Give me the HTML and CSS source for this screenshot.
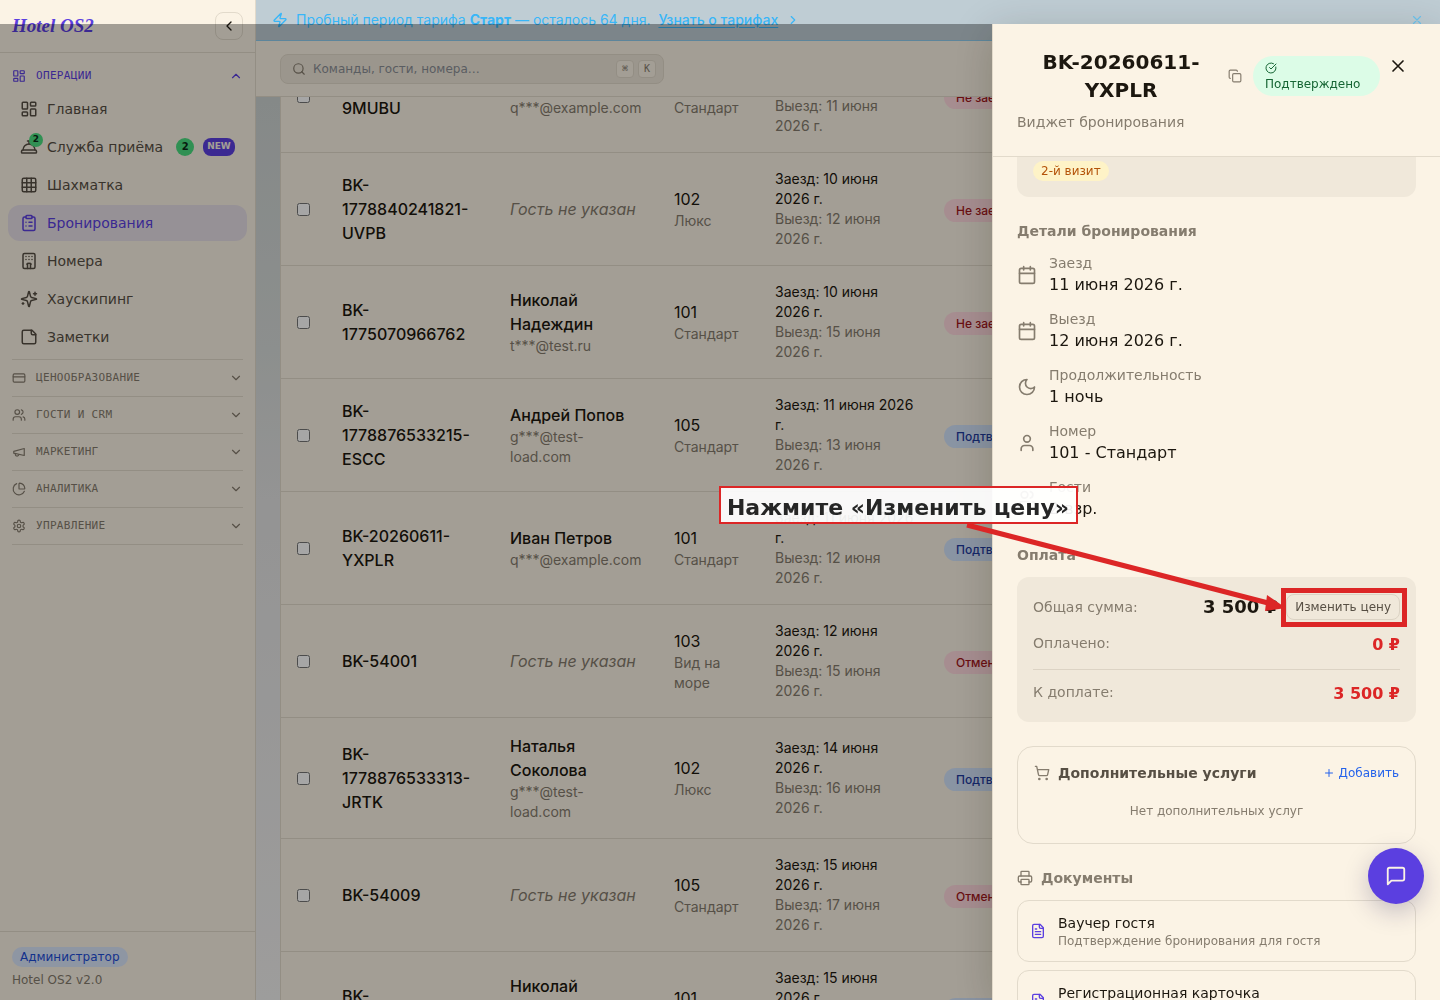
FILE: index.html
```html
<!DOCTYPE html>
<html lang="ru">
<head>
<meta charset="utf-8">
<meta name="viewport" content="width=device-width, initial-scale=1">
<title>Hotel OS2 — Бронирования</title>
<link rel="stylesheet" href="styles.css">
</head>
<body>
<svg class="sprite" aria-hidden="true">
  <symbol id="i-dash" viewBox="0 0 24 24"><rect x="3" y="3" width="7" height="9" rx="1"/><rect x="14" y="3" width="7" height="5" rx="1"/><rect x="14" y="12" width="7" height="9" rx="1"/><rect x="3" y="16" width="7" height="5" rx="1"/></symbol>
  <symbol id="i-bell" viewBox="0 0 24 24"><path d="M3 20a1 1 0 0 1-1-1v-1a2 2 0 0 1 2-2h16a2 2 0 0 1 2 2v1a1 1 0 0 1-1 1Z"/><path d="M20 16a8 8 0 1 0-16 0"/><path d="M12 4v4"/><path d="M10 4h4"/></symbol>
  <symbol id="i-grid" viewBox="0 0 24 24"><rect x="3" y="3" width="18" height="18" rx="2"/><path d="M3 9h18M3 15h18M9 3v18M15 3v18"/></symbol>
  <symbol id="i-clip" viewBox="0 0 24 24"><rect x="8" y="2" width="8" height="4" rx="1"/><path d="M16 4h2a2 2 0 0 1 2 2v14a2 2 0 0 1-2 2H6a2 2 0 0 1-2-2V6a2 2 0 0 1 2-2h2"/><path d="M12 11h4M12 16h4M8 11h.01M8 16h.01"/></symbol>
  <symbol id="i-hotel" viewBox="0 0 24 24"><rect x="4" y="2" width="16" height="20" rx="2"/><path d="M10 22v-6.600M14 15.400V22M15 16a5 5 0 0 0-6 0M8 6h.01M12 6h.01M16 6h.01M8 10h.01M12 10h.01M16 10h.01"/></symbol>
  <symbol id="i-spark" viewBox="0 0 24 24"><path d="M9.937 15.500A2 2 0 0 0 8.500 14.063l-6.135-1.582a.5.5 0 0 1 0-.962L8.500 9.936A2 2 0 0 0 9.937 8.500l1.582-6.135a.5.5 0 0 1 .963 0L14.063 8.500A2 2 0 0 0 15.500 9.937l6.135 1.581a.5.5 0 0 1 0 .964L15.500 14.063a2 2 0 0 0-1.437 1.437l-1.582 6.135a.5.5 0 0 1-.963 0z"/><path d="M20 3v4M22 5h-4M4 17v2M5 18H3"/></symbol>
  <symbol id="i-note" viewBox="0 0 24 24"><path d="M16 3H5a2 2 0 0 0-2 2v14a2 2 0 0 0 2 2h14a2 2 0 0 0 2-2V8Z"/><path d="M15 3v4a2 2 0 0 0 2 2h4"/></symbol>
  <symbol id="i-card" viewBox="0 0 24 24"><rect x="2" y="5" width="20" height="14" rx="2"/><path d="M2 10h20"/></symbol>
  <symbol id="i-users" viewBox="0 0 24 24"><path d="M16 21v-2a4 4 0 0 0-4-4H6a4 4 0 0 0-4 4v2"/><circle cx="9" cy="7" r="4"/><path d="M22 21v-2a4 4 0 0 0-3-3.870M16 3.130a4 4 0 0 1 0 7.750"/></symbol>
  <symbol id="i-mega" viewBox="0 0 24 24"><path d="m3 11 18-5v12L3 14v-3z"/><path d="M11.600 16.800a3 3 0 1 1-5.800-1.600"/></symbol>
  <symbol id="i-pie" viewBox="0 0 24 24"><path d="M21 12c.552 0 1.005-.449.950-.998a10 10 0 0 0-8.953-8.951c-.550-.055-.998.398-.998.950v8a1 1 0 0 0 1 1z"/><path d="M21.210 15.890A10 10 0 1 1 8 2.830"/></symbol>
  <symbol id="i-gear" viewBox="0 0 24 24"><path d="M12.220 2h-.440a2 2 0 0 0-2 2v.180a2 2 0 0 1-1 1.730l-.430.250a2 2 0 0 1-2 0l-.150-.080a2 2 0 0 0-2.730.730l-.220.380a2 2 0 0 0 .730 2.730l.150.100a2 2 0 0 1 1 1.720v.510a2 2 0 0 1-1 1.740l-.150.090a2 2 0 0 0-.730 2.730l.220.380a2 2 0 0 0 2.730.730l.150-.080a2 2 0 0 1 2 0l.430.250a2 2 0 0 1 1 1.730V20a2 2 0 0 0 2 2h.440a2 2 0 0 0 2-2v-.180a2 2 0 0 1 1-1.730l.430-.250a2 2 0 0 1 2 0l.150.080a2 2 0 0 0 2.730-.730l.220-.390a2 2 0 0 0-.730-2.730l-.150-.080a2 2 0 0 1-1-1.740v-.500a2 2 0 0 1 1-1.740l.150-.090a2 2 0 0 0 .730-2.730l-.220-.380a2 2 0 0 0-2.730-.730l-.150.080a2 2 0 0 1-2 0l-.430-.250a2 2 0 0 1-1-1.730V4a2 2 0 0 0-2-2z"/><circle cx="12" cy="12" r="3"/></symbol>
  <symbol id="i-up" viewBox="0 0 24 24"><path d="m18 15-6-6-6 6"/></symbol>
  <symbol id="i-down" viewBox="0 0 24 24"><path d="m6 9 6 6 6-6"/></symbol>
  <symbol id="i-left" viewBox="0 0 24 24"><path d="m15 18-6-6 6-6"/></symbol>
  <symbol id="i-right" viewBox="0 0 24 24"><path d="m9 18 6-6-6-6"/></symbol>
  <symbol id="i-zap" viewBox="0 0 24 24"><path d="M4 14a1 1 0 0 1-.780-1.630l9.900-10.200a.5.5 0 0 1 .860.460l-1.920 6.020A1 1 0 0 0 13 10h7a1 1 0 0 1 .780 1.630l-9.900 10.200a.5.5 0 0 1-.860-.460l1.920-6.020A1 1 0 0 0 11 14z"/></symbol>
  <symbol id="i-x" viewBox="0 0 24 24"><path d="M18 6 6 18M6 6l12 12"/></symbol>
  <symbol id="i-search" viewBox="0 0 24 24"><circle cx="11" cy="11" r="8"/><path d="m21 21-4.300-4.300"/></symbol>
  <symbol id="i-copy" viewBox="0 0 24 24"><rect x="8" y="8" width="14" height="14" rx="2"/><path d="M4 16c-1.100 0-2-.9-2-2V4c0-1.100.9-2 2-2h10c1.100 0 2 .9 2 2"/></symbol>
  <symbol id="i-check" viewBox="0 0 24 24"><path d="M21.801 10A10 10 0 1 1 17 3.335"/><path d="m9 11 3 3L22 4"/></symbol>
  <symbol id="i-cal" viewBox="0 0 24 24"><path d="M8 2v4M16 2v4M3 10h18"/><rect x="3" y="4" width="18" height="18" rx="2"/></symbol>
  <symbol id="i-moon" viewBox="0 0 24 24"><path d="M12 3a6 6 0 0 0 9 9 9 9 0 1 1-9-9Z"/></symbol>
  <symbol id="i-user" viewBox="0 0 24 24"><path d="M19 21v-2a4 4 0 0 0-4-4H9a4 4 0 0 0-4 4v2"/><circle cx="12" cy="7" r="4"/></symbol>
  <symbol id="i-cart" viewBox="0 0 24 24"><circle cx="8" cy="21" r="1"/><circle cx="19" cy="21" r="1"/><path d="M2.050 2.050h2l2.660 12.420a2 2 0 0 0 2 1.580h9.780a2 2 0 0 0 1.950-1.570l1.650-7.430H5.120"/></symbol>
  <symbol id="i-plus" viewBox="0 0 24 24"><path d="M5 12h14M12 5v14"/></symbol>
  <symbol id="i-print" viewBox="0 0 24 24"><path d="M6 18H4a2 2 0 0 1-2-2v-5a2 2 0 0 1 2-2h16a2 2 0 0 1 2 2v5a2 2 0 0 1-2 2h-2"/><path d="M6 9V3a1 1 0 0 1 1-1h10a1 1 0 0 1 1 1v6"/><rect x="6" y="14" width="12" height="8" rx="1"/></symbol>
  <symbol id="i-file" viewBox="0 0 24 24"><path d="M15 2H6a2 2 0 0 0-2 2v16a2 2 0 0 0 2 2h12a2 2 0 0 0 2-2V7Z"/><path d="M14 2v4a2 2 0 0 0 2 2h4M10 9H8M16 13H8M16 17H8"/></symbol>
  <symbol id="i-chat" viewBox="0 0 24 24"><path d="M21 15a2 2 0 0 1-2 2H7l-4 4V5a2 2 0 0 1 2-2h14a2 2 0 0 1 2 2z"/></symbol>
</svg>

<div class="app">
  <aside class="sidebar">
    <div class="sidebar-head">
      <span class="logo">Hotel OS2</span>
      <button class="collapse" aria-label="Свернуть меню"><svg class="icon s16"><use href="#i-left"/></svg></button>
    </div>
    <nav class="nav">
      <button class="section open"><svg class="icon s14"><use href="#i-dash"/></svg><span>Операции</span><svg class="icon s14"><use href="#i-up"/></svg></button>
      <div class="items">
        <a class="item" href="#"><svg class="icon s18"><use href="#i-dash"/></svg>Главная</a>
        <a class="item" href="#"><span class="icon-wrap"><svg class="icon s18"><use href="#i-bell"/></svg><b class="dot">2</b></span>Служба приёма<b class="count">2</b><b class="new">NEW</b></a>
        <a class="item" href="#"><svg class="icon s18"><use href="#i-grid"/></svg>Шахматка</a>
        <a class="item active" href="#"><svg class="icon s18"><use href="#i-clip"/></svg>Бронирования</a>
        <a class="item" href="#"><svg class="icon s18"><use href="#i-hotel"/></svg>Номера</a>
        <a class="item" href="#"><svg class="icon s18"><use href="#i-spark"/></svg>Хаускипинг</a>
        <a class="item" href="#"><svg class="icon s18"><use href="#i-note"/></svg>Заметки</a>
      </div>
      <div class="sections">
        <button class="section"><svg class="icon s14"><use href="#i-card"/></svg><span>Ценообразование</span><svg class="icon s14"><use href="#i-down"/></svg></button>
        <button class="section"><svg class="icon s14"><use href="#i-users"/></svg><span>Гости и CRM</span><svg class="icon s14"><use href="#i-down"/></svg></button>
        <button class="section"><svg class="icon s14"><use href="#i-mega"/></svg><span>Маркетинг</span><svg class="icon s14"><use href="#i-down"/></svg></button>
        <button class="section"><svg class="icon s14"><use href="#i-pie"/></svg><span>Аналитика</span><svg class="icon s14"><use href="#i-down"/></svg></button>
        <button class="section"><svg class="icon s14"><use href="#i-gear"/></svg><span>Управление</span><svg class="icon s14"><use href="#i-down"/></svg></button>
      </div>
    </nav>
    <div class="sidebar-foot">
      <span class="role">Администратор</span>
      <span class="version">Hotel OS2 v2.0</span>
    </div>
  </aside>

  <main class="main">
    <div class="banner">
      <svg class="icon s16"><use href="#i-zap"/></svg>
      <span>Пробный период тарифа <b>Старт</b> — осталось 64 дня.</span>
      <a href="#">Узнать о тарифах</a>
      <svg class="icon s14"><use href="#i-right"/></svg>
      <button class="banner-close" aria-label="Закрыть"><svg class="icon s14"><use href="#i-x"/></svg></button>
    </div>
    <header class="topbar">
      <label class="search">
        <svg class="icon s14"><use href="#i-search"/></svg>
        <input type="text" aria-label="Поиск" placeholder="Команды, гости, номера…">
        <kbd>⌘</kbd><kbd>K</kbd>
      </label>
    </header>
    <div class="content">
      <table class="bookings">
        <colgroup><col class="c-check"><col class="c-id"><col class="c-guest"><col class="c-room"><col class="c-dates"><col></colgroup>
        <tbody>
          <tr><td><input type="checkbox" aria-label="Выбрать"></td><td class="id">BK-20260610-9MUBU</td><td><div class="name">Иван Петров</div><div class="sub">q***@example.com</div></td><td><div>101</div><div class="sub">Стандарт</div></td><td class="dates"><div>Заезд: 10 июня 2026 г.</div><div class="sub">Выезд: 11 июня 2026 г.</div></td><td><span class="status red">Не заехал</span></td></tr>
          <tr><td><input type="checkbox" aria-label="Выбрать"></td><td class="id">BK-1778840241821-UVPB</td><td><i class="none">Гость не указан</i></td><td><div>102</div><div class="sub">Люкс</div></td><td class="dates"><div>Заезд: 10 июня 2026 г.</div><div class="sub">Выезд: 12 июня 2026 г.</div></td><td><span class="status red">Не заехал</span></td></tr>
          <tr><td><input type="checkbox" aria-label="Выбрать"></td><td class="id">BK-1775070966762</td><td><div class="name">Николай Надеждин</div><div class="sub">t***@test.ru</div></td><td><div>101</div><div class="sub">Стандарт</div></td><td class="dates"><div>Заезд: 10 июня 2026 г.</div><div class="sub">Выезд: 15 июня 2026 г.</div></td><td><span class="status red">Не заехал</span></td></tr>
          <tr><td><input type="checkbox" aria-label="Выбрать"></td><td class="id">BK-1778876533215-ESCC</td><td><div class="name">Андрей Попов</div><div class="sub">g***@test-load.com</div></td><td><div>105</div><div class="sub">Стандарт</div></td><td class="dates"><div>Заезд: 11 июня 2026 г.</div><div class="sub">Выезд: 13 июня 2026 г.</div></td><td><span class="status blue">Подтверждено</span></td></tr>
          <tr><td><input type="checkbox" aria-label="Выбрать"></td><td class="id">BK-20260611-YXPLR</td><td><div class="name">Иван Петров</div><div class="sub">q***@example.com</div></td><td><div>101</div><div class="sub">Стандарт</div></td><td class="dates"><div>Заезд: 11 июня 2026 г.</div><div class="sub">Выезд: 12 июня 2026 г.</div></td><td><span class="status blue">Подтверждено</span></td></tr>
          <tr><td><input type="checkbox" aria-label="Выбрать"></td><td class="id">BK-54001</td><td><i class="none">Гость не указан</i></td><td><div>103</div><div class="sub">Вид на море</div></td><td class="dates"><div>Заезд: 12 июня 2026 г.</div><div class="sub">Выезд: 15 июня 2026 г.</div></td><td><span class="status red">Отменено</span></td></tr>
          <tr><td><input type="checkbox" aria-label="Выбрать"></td><td class="id">BK-1778876533313-JRTK</td><td><div class="name">Наталья Соколова</div><div class="sub">g***@test-load.com</div></td><td><div>102</div><div class="sub">Люкс</div></td><td class="dates"><div>Заезд: 14 июня 2026 г.</div><div class="sub">Выезд: 16 июня 2026 г.</div></td><td><span class="status blue">Подтверждено</span></td></tr>
          <tr><td><input type="checkbox" aria-label="Выбрать"></td><td class="id">BK-54009</td><td><i class="none">Гость не указан</i></td><td><div>105</div><div class="sub">Стандарт</div></td><td class="dates"><div>Заезд: 15 июня 2026 г.</div><div class="sub">Выезд: 17 июня 2026 г.</div></td><td><span class="status red">Отменено</span></td></tr>
          <tr><td><input type="checkbox" aria-label="Выбрать"></td><td class="id">BK-1775070966763</td><td><div class="name">Николай Надеждин</div><div class="sub">t***@test.ru</div></td><td><div>101</div><div class="sub">Стандарт</div></td><td class="dates"><div>Заезд: 15 июня 2026 г.</div><div class="sub">Выезд: 18 июня 2026 г.</div></td><td><span class="status blue">Подтверждено</span></td></tr>
        </tbody>
      </table>
    </div>
  </main>
</div>

<div class="overlay"></div>

<section class="drawer" role="dialog" aria-label="Бронирование">
  <header class="drawer-head">
    <div class="drawer-main">
      <div class="drawer-title">
        <h2>BK-20260611-YXPLR</h2>
        <button class="plain copy" aria-label="Копировать"><svg class="icon s14"><use href="#i-copy"/></svg></button>
        <span class="confirmed"><svg class="icon s12"><use href="#i-check"/></svg><span>Подтверждено</span></span>
      </div>
      <p>Виджет бронирования</p>
    </div>
    <button class="plain close" aria-label="Закрыть"><svg class="icon s20"><use href="#i-x"/></svg></button>
  </header>
  <div class="drawer-body">
    <div class="guest-card"><span class="visit">2-й визит</span></div>
    <section class="block">
      <h3>Детали бронирования</h3>
      <div class="detail"><svg class="icon s20"><use href="#i-cal"/></svg><div><div class="label">Заезд</div><div>11 июня 2026 г.</div></div></div>
      <div class="detail"><svg class="icon s20"><use href="#i-cal"/></svg><div><div class="label">Выезд</div><div>12 июня 2026 г.</div></div></div>
      <div class="detail"><svg class="icon s20"><use href="#i-moon"/></svg><div><div class="label">Продолжительность</div><div>1 ночь</div></div></div>
      <div class="detail"><svg class="icon s20"><use href="#i-user"/></svg><div><div class="label">Номер</div><div>101 - Стандарт</div></div></div>
      <div class="detail"><svg class="icon s20"><use href="#i-users"/></svg><div><div class="label">Гости</div><div>2 взр.</div></div></div>
    </section>
    <section class="block">
      <h3>Оплата</h3>
      <div class="pay">
        <div class="pay-row total"><span class="label">Общая сумма:</span><span class="sum"><b>3 500 ₽</b><button class="edit">Изменить цену</button></span></div>
        <div class="pay-row"><span class="label">Оплачено:</span><b class="due">0 ₽</b></div>
        <div class="pay-row rule"><span class="label">К доплате:</span><b class="due">3 500 ₽</b></div>
      </div>
    </section>
    <section class="extras">
      <div class="extras-head"><svg class="icon s16"><use href="#i-cart"/></svg><h3>Дополнительные услуги</h3><button class="plain add"><svg class="icon s12"><use href="#i-plus"/></svg>Добавить</button></div>
      <p>Нет дополнительных услуг</p>
    </section>
    <section class="block">
      <h3 class="with-icon"><svg class="icon s16"><use href="#i-print"/></svg>Документы</h3>
      <div class="docs">
        <a class="doc" href="#"><svg class="icon s16"><use href="#i-file"/></svg><span><span class="doc-name">Ваучер гостя</span><span class="doc-note">Подтверждение бронирования для гостя</span></span></a>
        <a class="doc" href="#"><svg class="icon s16"><use href="#i-file"/></svg><span><span class="doc-name">Регистрационная карточка</span><span class="doc-note">Анкета гостя для заселения</span></span></a>
      </div>
    </section>
  </div>
</section>

<button class="chat" aria-label="Чат"><svg class="icon s22"><use href="#i-chat"/></svg></button>

<div class="guide">
  <div class="guide-text">Нажмите «Изменить цену»</div>
  <svg class="guide-arrow" viewBox="0 0 320 90"><path d="M1 1 306 80" stroke="#dc2626" stroke-width="5"/><path d="m301 71 19 13-21 3z" fill="#dc2626"/></svg>
  <div class="guide-frame"></div>
</div>
</body>
</html>
```
FILE: styles.css
```css
:root {
  --cream: #fbf3e5;
  --line: #e2dacb;
  --muted: #857c6e;
  --text: #574f44;
  --ink: #1c170f;
  --violet: #5b3fe0;
  --red: #dc2626;
}
* { box-sizing: border-box; margin: 0; padding: 0; }
body {
  height: 100vh;
  overflow: hidden;
  font-family: "DejaVu Sans", sans-serif;
  font-size: 16px;
  line-height: 24px;
  color: var(--ink);
}
button, input { font: inherit; color: inherit; }
button { background: none; border: 0; cursor: pointer; }
a { color: inherit; text-decoration: none; }
.sprite { display: none; }
.icon { flex: none; fill: none; stroke: currentColor; stroke-width: 2; stroke-linecap: round; stroke-linejoin: round; }
.s12 { width: 12px; height: 12px; }
.s14 { width: 14px; height: 14px; }
.s16 { width: 16px; height: 16px; }
.s18 { width: 18px; height: 18px; }
.s20 { width: 20px; height: 20px; }
.s22 { width: 22px; height: 22px; }

.app { display: grid; grid-template-columns: 256px minmax(0, 1fr); height: 100vh; }

.sidebar { display: flex; flex-direction: column; background: var(--cream); border-right: 1px solid var(--line); }
.sidebar-head { display: flex; align-items: center; justify-content: space-between; padding: 12px; border-bottom: 1px solid var(--line); }
.logo { font: italic bold 19px/28px "Liberation Serif", serif; color: var(--violet); }
.collapse { display: grid; place-items: center; width: 28px; height: 28px; border: 1px solid var(--line); border-radius: 8px; color: var(--ink); }
.nav { flex: 1; padding-top: 8px; }
.section {
  display: flex; align-items: center; gap: 10px;
  width: 100%;
  font: 11px/16px "DejaVu Sans Mono", monospace;
  letter-spacing: 0.03em;
  text-align: left; text-transform: uppercase;
  color: var(--muted);
}
.section span { flex: 1; }
.section.open { height: 30px; padding: 0 12px; color: var(--violet); }
.items { display: flex; flex-direction: column; gap: 2px; padding: 0 8px; }
.item { display: flex; align-items: center; gap: 9px; height: 36px; padding: 0 12px; border-radius: 12px; font-size: 14px; white-space: nowrap; color: var(--text); }
.item.active { background: #e7dfe6; color: var(--violet); }
.icon-wrap { position: relative; display: flex; }
.dot { position: absolute; top: -5px; right: -5px; width: 14px; height: 14px; border-radius: 7px; background: #4ade80; font-size: 9px; line-height: 13px; text-align: center; color: #0c2a17; }
.count { margin-left: 4px; width: 18px; height: 18px; border-radius: 9px; background: #4ade80; font-size: 10px; line-height: 18px; text-align: center; color: #0c2a17; }
.new { height: 18px; padding: 0 4px; border-radius: 8px; background: var(--violet); font-size: 9px; line-height: 17px; color: var(--cream); }
.sections { margin: 4px 12px 0; border-top: 1px solid var(--line); }
.sections .section { height: 37px; border-bottom: 1px solid var(--line); }
.sidebar-foot { display: flex; flex-direction: column; align-items: flex-start; gap: 4px; padding: 15px 12px 11px; border-top: 1px solid var(--line); font-size: 12px; line-height: 18px; color: var(--muted); }
.role { padding: 0 8px; border-radius: 10px; background: #dbe6fb; line-height: 20px; color: #1d4ed8; }

.main { display: flex; flex-direction: column; min-width: 0; height: 100vh; overflow: hidden; background: linear-gradient(#cdd3d2 10%, #d8dcda 35%, #e3e3e3 50%, #f2f1f0); }
.banner { display: flex; flex: none; align-items: center; gap: 8px; height: 41px; padding: 0 16px; background: #bfcdd4; border-bottom: 1px solid #8fcdee; font: 14px/20px Inter, sans-serif; color: #38b6f8; }
.banner a { font-weight: 500; text-decoration: underline; text-underline-offset: 2px; }
.banner-close { display: flex; margin-left: auto; color: #6cc4f0; }
.topbar { display: flex; flex: none; align-items: center; height: 56px; padding: 0 24px; background: var(--cream); border-bottom: 1px solid var(--line); }
.search { display: flex; align-items: center; gap: 4px; width: 384px; height: 30px; padding: 0 7px 0 11px; border: 1px solid var(--line); border-radius: 8px; background: #efe7d9; color: var(--muted); }
.search input { flex: 1; min-width: 0; margin-left: 3px; border: 0; outline: 0; background: none; font-size: 12px; }
.search input::placeholder { color: #8b8f96; opacity: 1; }
kbd { width: 18px; height: 18px; border: 1px solid var(--line); border-radius: 4px; background: var(--cream); font: 10px/15px "DejaVu Sans Mono", monospace; text-align: center; }
.content { flex: 1; min-height: 0; overflow: hidden; padding: 0 24px; }
/* the list is scrolled half a row down */
.bookings { width: 100%; margin-top: -57px; table-layout: fixed; border-collapse: separate; border-spacing: 0; border: 1px solid var(--line); border-width: 0 1px; background: var(--cream); font-family: Inter, sans-serif; }
.bookings td { padding: 16px; border-bottom: 1px solid var(--line); vertical-align: middle; }
.bookings input { display: block; width: 13px; height: 13px; }
.c-check { width: 45px; }
.c-id { width: 168px; }
.c-guest { width: 164px; }
.c-room { width: 101px; }
.c-dates { width: 169px; }
.id, .name { font-weight: 500; }
.sub { font-size: 14px; line-height: 20px; color: var(--muted); }
.bookings .dates { padding-right: 12px; font-size: 14px; line-height: 20px; }
.none { color: var(--muted); }
.status { display: inline-block; padding: 0 12px; border-radius: 12px; font-size: 12px; font-weight: 500; line-height: 23px; white-space: nowrap; }
.red { background: #ffd9de; color: #a3161b; }
.blue { background: #d3e3fb; color: #1e3a9f; }

.overlay { position: fixed; inset: 24px 0 0; background: rgba(0, 0, 0, 0.35); }
.drawer { position: fixed; inset: 24px 0 0 auto; display: flex; flex-direction: column; width: 448px; background: var(--cream); border-left: 1px solid var(--line); box-shadow: 0 8px 40px rgba(28, 23, 5, 0.2); }
.drawer-head { display: flex; flex: none; align-items: flex-start; padding: 24px; border-bottom: 1px solid var(--line); }
.drawer-main { flex: 1; min-width: 0; }
.drawer-title { display: flex; align-items: center; }
.drawer-title h2 { flex: 1; font-size: 20px; line-height: 28px; text-align: center; }
.drawer-main p { margin-top: 8px; font-size: 14px; line-height: 20px; color: var(--muted); }
.plain { display: flex; align-items: center; }
.copy { padding: 4px 3px; color: var(--muted); }
.confirmed { width: 127px; margin-left: 8px; padding: 4px 12px; border-radius: 20px; background: #dcfce7; font-size: 12px; line-height: 16px; color: #166534; }
.confirmed .icon { display: block; margin: 2px 0; }
.confirmed span { display: block; }
.close { justify-content: center; width: 36px; height: 36px; }
.drawer-body { flex: 1; min-height: 0; overflow: hidden; padding: 0 24px; display: flex; flex-direction: column; gap: 24px; }
.drawer-body > * { flex: none; }
.guest-card { padding: 4px 16px 16px; border-radius: 0 0 12px 12px; background: #f0e8da; line-height: 20px; }
.visit { display: inline-block; padding: 0 8px; border-radius: 10px; background: #fef3c7; font-size: 12px; color: #b45309; vertical-align: top; }
.block { display: flex; flex-direction: column; gap: 12px; }
h3 { font-size: 14px; line-height: 20px; color: var(--muted); }
.detail { display: flex; align-items: center; gap: 12px; }
.detail .icon { color: var(--muted); }
.label { font-size: 14px; line-height: 20px; color: var(--muted); }
.pay { display: flex; flex-direction: column; gap: 12px; padding: 16px; border-radius: 12px; background: #f0e8da; }
.pay-row { display: flex; justify-content: space-between; }
.total, .sum { align-items: center; }
.sum { display: flex; gap: 8px; font-size: 18px; line-height: 28px; }
.edit { padding: 4px 8px; border: 1px solid #dcd3c4; border-radius: 8px; font-size: 12px; line-height: 16px; color: var(--text); }
.due { color: var(--red); }
.rule { padding-top: 12px; border-top: 1px solid #dcd3c4; }
.extras { padding: 16px; border: 1px solid var(--line); border-radius: 16px; }
.extras-head { display: flex; align-items: center; gap: 8px; color: var(--muted); }
.extras-head h3 { flex: 1; color: var(--text); }
.add { gap: 4px; font-size: 12px; line-height: 16px; color: #2563eb; }
.extras p { padding: 20px 0 8px; font-size: 12px; line-height: 16px; text-align: center; color: var(--muted); }
.with-icon { display: flex; align-items: center; gap: 8px; }
.docs { display: flex; flex-direction: column; gap: 8px; }
.doc { display: flex; align-items: center; gap: 12px; padding: 12px; border: 1px solid var(--line); border-radius: 12px; }
.doc .icon { color: var(--violet); }
.doc span span { display: block; }
.doc-name { font-size: 14px; line-height: 20px; }
.doc-note { font-size: 12px; line-height: 16px; color: var(--muted); }

.chat { position: fixed; right: 16px; bottom: 96px; display: grid; place-items: center; width: 56px; height: 56px; border-radius: 28px; background: var(--violet); color: var(--cream); box-shadow: 0 8px 24px rgba(40, 30, 90, 0.25); }

.guide-text { position: absolute; top: 486px; right: 362px; height: 38px; padding: 0 7px 0 6px; border: 2px solid var(--red); background: rgba(255, 255, 255, 0.93); font-size: 22px; font-weight: bold; line-height: 39px; white-space: nowrap; color: #262626; }
.guide-arrow { position: absolute; top: 524px; right: 154px; width: 320px; height: 90px; overflow: visible; }
.guide-frame { position: absolute; top: 588px; right: 33px; width: 126px; height: 39px; border: 5px solid var(--red); }
```
